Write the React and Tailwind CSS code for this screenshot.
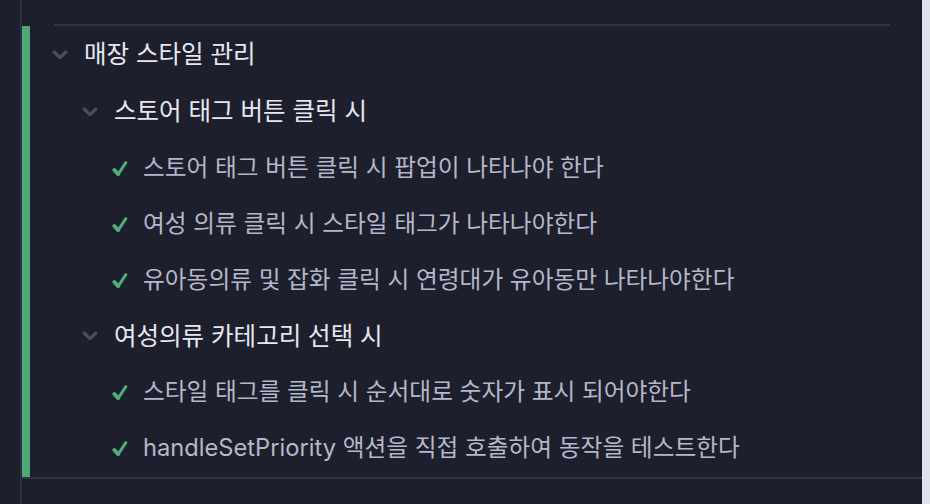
import React from 'react';

const suites = [
  {
    title: '스토어 태그 버튼 클릭 시',
    h: 'h-[57px]',
    tests: [
      '스토어 태그 버튼 클릭 시 팝업이 나타나야 한다',
      '여성 의류 클릭 시 스타일 태그가 나타나야한다',
      '유아동의류 및 잡화 클릭 시 연령대가 유아동만 나타나야한다',
    ],
  },
  {
    title: '여성의류 카테고리 선택 시',
    h: 'h-[56px]',
    tests: [
      '스타일 태그를 클릭 시 순서대로 숫자가 표시 되어야한다',
      'handleSetPriority 액션을 직접 호출하여 동작을 테스트한다',
    ],
  },
];

const Chevron = () => (
  <svg width="16" height="10" viewBox="0 0 16 10" fill="none">
    <path d="M2.2 2 L8 7.6 L13.8 2" stroke="#4a4c65" strokeWidth="3.2" strokeLinecap="round" strokeLinejoin="round" />
  </svg>
);

// heavy check: thick short arm, tapering long arm
const CheckMark = () => (
  <svg width="16" height="17" viewBox="0 0 16 17" fill="none">
    <path d="M2.4 10 L6.2 14.2" stroke="#4cae78" strokeWidth="3.8" strokeLinecap="round" />
    <path d="M6.2 14.2 L13.8 2.6" stroke="#4cae78" strokeWidth="3" strokeLinecap="round" />
  </svg>
);

const App = () => {
  return (
    <div className="flex h-[504px] w-[930px] overflow-hidden bg-[#1e1f2d] font-['Inter','Noto_Sans_CJK_KR',sans-serif]">
      <div className="w-[20px]" />
      <div className="w-[2px] bg-[#2d2e43]" />
      <div className="flex flex-1 flex-col">
        <div className="h-[24px]" />
        <div className="mx-[32px] h-[2px] bg-[#32334a]" />
        <div className="flex">
          <div className="w-[8px] bg-[#4daa77]" />
          <div className="flex-1 pb-[1px]">
            {/* root suite */}
            <div className="flex h-[57px] items-center pl-[22px]">
              <Chevron />
              <span className="ml-[16px] text-[24.5px] leading-none text-[#e6e7ef]">매장 스타일 관리</span>
            </div>
            {suites.map((suite) => (
              <div key={suite.title}>
                <div className={`flex ${suite.h} items-center pl-[52px]`}>
                  <Chevron />
                  <span className="ml-[16px] text-[24.5px] leading-none text-[#e6e7ef]">{suite.title}</span>
                </div>
                {suite.tests.map((t) => (
                  <div key={t} className="flex h-[56px] items-center pl-[82px]">
                    <CheckMark />
                    <span className="ml-[15px] text-[23.7px] leading-none text-[#b5b7ca]">{t}</span>
                  </div>
                ))}
              </div>
            ))}
          </div>
        </div>
        <div className="h-[2px] bg-[#32334a]" />
      </div>
      <div className="w-[8px] bg-[#e1e3ec]" />
    </div>
  );
};

export default App;
